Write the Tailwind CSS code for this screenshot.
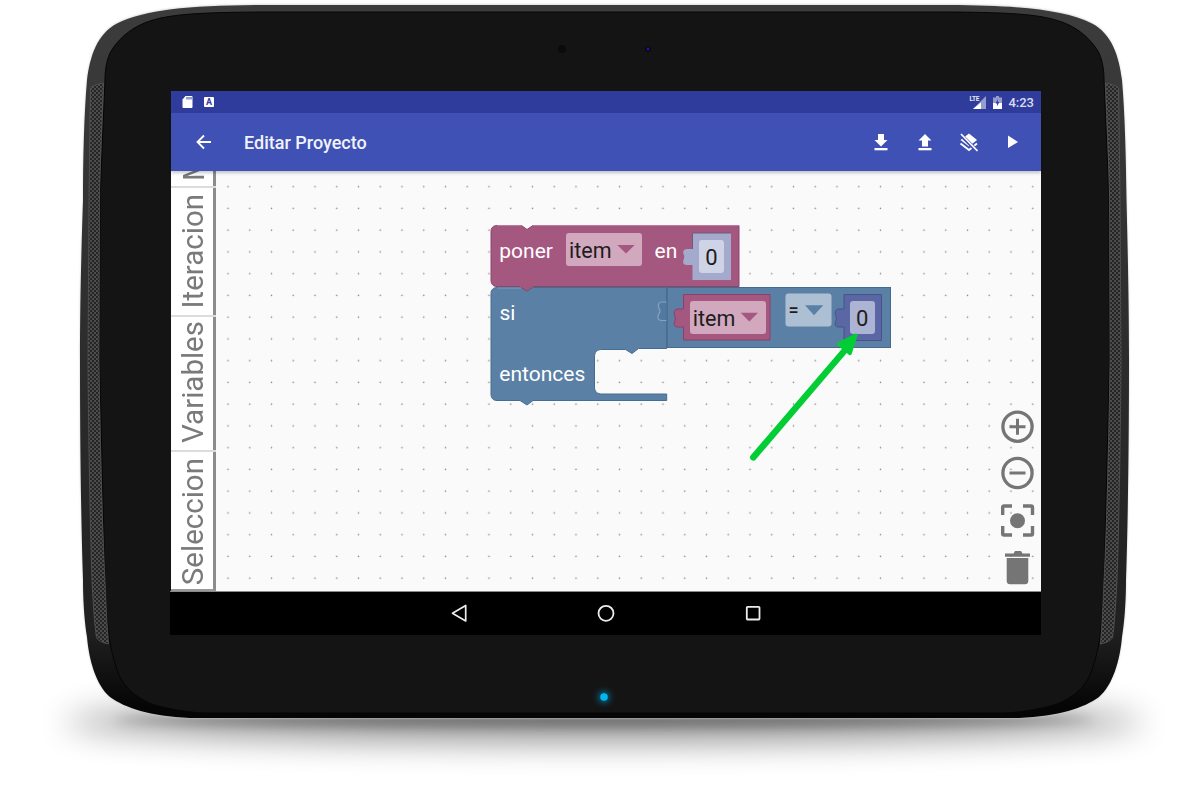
<!DOCTYPE html>
<html>
<head>
<meta charset="utf-8">
<script src="https://cdn.jsdelivr.net/npm/@tailwindcss/browser@4"></script>
<title>Editar Proyecto</title>
</head>
<body class="bg-white">
<div class="relative w-[1200px] h-[797px] overflow-hidden bg-white font-['Roboto',sans-serif]">
  <!-- device body -->
  <svg class="absolute inset-0" width="1200" height="797" viewBox="0 0 1200 797">
    <defs>
      <filter id="soft" x="-20%" y="-300%" width="140%" height="700%"><feGaussianBlur stdDeviation="16"/></filter>
      <filter id="soft2" x="-20%" y="-300%" width="140%" height="700%"><feGaussianBlur stdDeviation="6"/></filter>
      <filter id="halo" x="-5%" y="-5%" width="110%" height="110%"><feGaussianBlur stdDeviation="1"/></filter>
      <filter id="glow" x="-200%" y="-200%" width="500%" height="500%"><feGaussianBlur stdDeviation="3"/></filter>
      <linearGradient id="bez" x1="0" y1="0" x2="0" y2="1">
        <stop offset="0" stop-color="#3c3c3c"/><stop offset="0.5" stop-color="#2c2c2c"/><stop offset="0.88" stop-color="#202020"/><stop offset="0.985" stop-color="#050505"/>
      </linearGradient>
      <pattern id="holes" width="4" height="4" patternUnits="userSpaceOnUse">
        <rect width="4" height="4" fill="#4c4c4c"/>
        <circle cx="1" cy="1" r="0.95" fill="#141414"/>
        <circle cx="3" cy="3" r="0.95" fill="#141414"/>
      </pattern>
    </defs>
    <ellipse cx="604" cy="722" rx="540" ry="20" fill="#000" opacity="0.42" filter="url(#soft)"/>
    <ellipse cx="604" cy="720" rx="490" ry="7" fill="#000" opacity="0.35" filter="url(#soft2)"/>
    <path d="M260 4.500 C190 5 145 9 117 23 C97 34 90 56 87 80 C84 115 83 160 83 200 C81 260 80 310 80 360 C80 440 81 520 83 580 C83 605 85 625 87 637 C89 660 96 685 110 697 C125 708 150 716 190 718 L1019 718 C1059 716 1084 708 1099 697 C1113 685 1120 660 1122 637 C1124 625 1126 605 1126 580 C1128 520 1129 440 1129 360 C1129 310 1128 260 1126.500 200 C1126 160 1125 115 1122 80 C1119 56 1112 34 1092 23 C1064 9 1019 5 949 4.500 Z" fill="#cfcfcf" filter="url(#halo)"/>
    <path d="M260 5 C190 5.500 145 9.500 117 23.500 C97 34 90 56 87 80 C84 115 83 160 83 200 C81 260 80 310 80 360 C80 440 81 520 83 580 C83 605 85 625 87 637 C89 660 96 685 110 697 C125 708 150 716 190 718 L1019 718 C1059 716 1084 708 1099 697 C1113 685 1120 660 1122 637 C1124 625 1126 605 1126 580 C1128 520 1129 440 1129 360 C1129 310 1128 260 1126.500 200 C1126 160 1125 115 1122 80 C1119 56 1112 34 1092 23.500 C1064 9.500 1019 5.500 949 5 Z" fill="url(#bez)"/>
    <path d="M260 12 C190 12.500 167 15 147 22 C128 29 116 42 110 53 C106 62 105 72 105 80 L100 200 L99.500 360 L105 580 C106 610 108 630 110 643 C113 658 116 668 120 677 C126 688 132 693 140 698 C148 703 156 706 167 708 C180 711 195 713 207 713 L1002 713 C1014 713 1029 711 1042 708 C1053 706 1061 703 1069 698 C1077 693 1083 688 1089 677 C1093 668 1096 658 1099 643 C1101 630 1103 610 1104 580 L1109.500 360 L1109 200 L1104 80 C1104 72 1103 62 1099 53 C1093 42 1081 29 1062 22 C1042 15 1019 12.500 949 12 Z" fill="#141414" stroke="#050505" stroke-width="1"/>
    <!-- speakers -->
    <path d="M90.500 88 C92 86 98 84 103.500 83 C102 120 100 160 99.500 200 L99 360 C100 440 102 520 105 580 C106 605 107 625 108.500 644 C103 643 99 641 96.500 638 C94 620 93 600 92 580 C90 520 88.500 440 88 360 L89 200 C89.500 160 90 120 90.500 88 Z" fill="url(#holes)" stroke="#5a5a5a" stroke-width="0.7"/>
    <path d="M1118.500 88 C1117 86 1111 84 1105.500 83 C1107 120 1109 160 1109.500 200 L1110 360 C1109 440 1107 520 1104 580 C1103 605 1102 625 1100.500 644 C1106 643 1110 641 1112.500 638 C1115 620 1116 600 1117 580 C1119 520 1120.500 440 1121 360 L1120 200 C1119.500 160 1119 120 1118.500 88 Z" fill="url(#holes)" stroke="#5a5a5a" stroke-width="0.7"/>
    <!-- camera -->
    <circle cx="562" cy="49" r="4" fill="#0b0b0b"/>
    <circle cx="648" cy="49" r="3" fill="#0a0a0a"/>
    <circle cx="648" cy="49" r="1.400" fill="#2a10c8"/>
    <!-- LED -->
    <circle cx="604" cy="697" r="6" fill="#00a8e8" opacity="0.55" filter="url(#glow)"/>
    <circle cx="604" cy="697" r="3.800" fill="#00b6f2"/>
  </svg>

  <!-- screen -->
  <div class="absolute left-[171px] top-[91px] w-[870px] h-[544px] flex flex-col">
    <!-- status bar -->
    <div class="h-[22px] shrink-0 bg-[#2f3c9b] flex items-center pl-[11px] pr-[7px]">
      <svg width="11" height="12" viewBox="0 0 11 12"><path d="M3.500 0H9.500A1 1 0 0 1 10.500 1V11A1 1 0 0 1 9.500 12H1.500A1 1 0 0 1 .5 11V3.500Z" fill="#fff"/><path d="M5 1v2.500M7 1v2.500M9 1v2.500" stroke="#2f3c9b" stroke-width="1"/></svg>
      <div class="ml-[11px] w-[10px] h-[10px] rounded-[1px] bg-white flex items-center justify-center text-[9px] leading-none font-bold text-[#2f3c9b]">A</div>
      <div class="ml-auto relative w-[17px] h-[13px]">
        <svg class="absolute inset-0" width="17" height="13" viewBox="0 0 17 13"><path d="M4 13H17V0Z" fill="#fff" opacity="0.5"/><path d="M4 13H12V6.500L4 13Z" fill="#fff"/></svg>
        <span class="absolute left-0 top-[0px] text-[6.500px] leading-none font-bold text-[#e4e6f4] tracking-[-0.2px]">LTE</span>
      </div>
      <svg class="ml-[7px]" width="9" height="13" viewBox="0 0 9 13"><path d="M3 0H6V1.500H9V13H0V1.500H3Z" fill="#fff" opacity="0.5"/><path d="M0 7H9V13H0Z" fill="#fff"/><path d="M5 3L2.500 7.500H4.200L3.800 10.500L6.500 6H4.800Z" fill="#2f3c9b"/></svg>
      <span class="ml-[6px] text-[13px] leading-none font-medium text-[#d9dcef]">4:23</span>
    </div>
    <!-- app bar -->
    <div class="h-[58px] shrink-0 bg-[#3f51b5] flex items-center relative z-10 shadow-[0_2px_3px_rgba(0,0,0,0.22)]">
      <svg class="ml-[25px]" width="16" height="16" viewBox="0 0 16 16"><path d="M15 8H2M8 1.500L1.500 8L8 14.500" fill="none" stroke="#fff" stroke-width="1.800"/></svg>
      <span class="ml-[32px] mt-[2px] text-[18px] leading-none font-medium text-[#f1f2fa]">Editar Proyecto</span>
      <div class="ml-auto flex items-center pr-[22px]">
        <svg width="14" height="17" viewBox="0 0 14 17"><path d="M4 0H10V6H13.500L7 12.500L.5 6H4Z" fill="#fff"/><rect x="0.500" y="14" width="13" height="2.300" fill="#fff"/></svg>
        <svg class="ml-[30px]" width="14" height="17" viewBox="0 0 14 17"><path d="M4 12.500H10V6.500H13.500L7 0L.5 6.500H4Z" fill="#fff"/><rect x="0.500" y="14" width="13" height="2.300" fill="#fff"/></svg>
        <svg class="ml-[27px]" width="19" height="19" viewBox="0 0 19 19"><path d="M10 .5L1.500 7L10 13.500L18 7Z" fill="#fff"/><path d="M1.500 10.500L10 17L18 10.500" fill="none" stroke="#fff" stroke-width="1.800"/><path d="M.5 .5L18.500 18.500" stroke="#3f51b5" stroke-width="3.800"/><path d="M2 1L18.500 18" stroke="#fff" stroke-width="1.700"/></svg>
        <svg class="ml-[29px]" width="12" height="14" viewBox="0 0 12 14"><path d="M1 0.500L11 7L1 13Z" fill="#fff"/></svg>
      </div>
    </div>
    <!-- workspace -->
    <div class="h-[420px] shrink-0 relative bg-[#fafafa] flex">
      <!-- grid of dots -->
      <svg class="absolute inset-0" width="870" height="420">
        <defs>
          <pattern id="grid" x="45.620" y="4.420" width="21.750" height="21.750" patternUnits="userSpaceOnUse">
            <circle cx="11.380" cy="11.280" r="0.800" fill="#8f8f8f"/>
          </pattern>
        </defs>
        <rect width="870" height="420" fill="url(#grid)"/>
      </svg>
      <!-- toolbox tabs -->
      <div class="relative w-[45px] h-full flex flex-col text-[#7a7a7a] text-[29.500px] leading-none">
        <div class="h-[15px] overflow-hidden bg-white border-r-[3px] border-[#8c8c8c] flex justify-center items-end pb-[5px] pl-[3px]"><span class="[writing-mode:vertical-rl] rotate-180 h-[16px] overflow-hidden">M</span></div>
        <div class="h-[2px] border-t-2 border-[#dcdcdc]"></div>
        <div class="h-[127px] bg-white border-r-[3px] border-[#8c8c8c] flex justify-center items-end pb-[6px] pl-[3px]"><span class="[writing-mode:vertical-rl] rotate-180">Iteracion</span></div>
        <div class="h-[2px] border-t-2 border-[#dcdcdc]"></div>
        <div class="h-[133px] bg-white border-r-[3px] border-[#8c8c8c] flex justify-center items-end pb-[7px] pl-[3px]"><span class="[writing-mode:vertical-rl] rotate-180">Variables</span></div>
        <div class="h-[2px] border-t-2 border-[#dcdcdc]"></div>
        <div class="h-[139px] bg-white border-r-[3px] border-[#8c8c8c] border-b-2 border-b-[#9a9a9a] flex justify-center items-end pb-[4px] pl-[3px]"><span class="[writing-mode:vertical-rl] rotate-180">Seleccion</span></div>
      </div>
      <!-- blocks: page coordinates, offset by the workspace origin -->
      <svg class="absolute left-0 top-0" width="870" height="420" viewBox="171 171 870 420">
        <!-- si block -->
        <path d="M497 287.500H521L527 291.500L533 287.500H666.700V348.500H638.500L632 353.500L625.500 349.500H602C597 349.500 594.500 352 594.500 357V387C594.500 391.500 597 394 602 394H666.700V400.500H533L527 405L520 400.500H497C493 400.500 491 398 491 394V293.500C491 290 493 287.500 497 287.500Z" fill="#5b80a5" stroke="#466d90" stroke-width="1"/>
        <path d="M497 288H521" stroke="#7f9dba" stroke-width="1"/>
        <rect x="667" y="287.500" width="223.500" height="60" fill="#5b80a5" stroke="#456a8d" stroke-width="1"/>
        <path d="M667 302H662C659 302 658 304 658.500 307C659 309 660 310 660 311C660 313 658.500 314 658 316C657.500 319 659 320.500 662 320.500H667" fill="#527aa0" stroke="#84a3bf" stroke-width="1.200"/>
        <path d="M667 288V347" stroke="#486c8e" stroke-width="1"/>
        <!-- poner block -->
        <path d="M497 225.500H521.500L527 229.500L533 225.500H739V286.500H533L527 291L520.500 286.500H497C493 286.500 491 284 491 280V231.500C491 228 493 225.500 497 225.500Z" fill="#a5587f" stroke="#8a456a" stroke-width="1"/>
        <path d="M497 225.500H521.500M533 225.500H739" stroke="#bd7a9c" stroke-width="1"/>
        <rect x="566" y="233" width="76" height="33" rx="3" fill="#d2a8bf"/>
        <path d="M617.300 245H634.700L626 253.500Z" fill="#a5587f"/>
        <!-- number in poner -->
        <path d="M692.500 233H731V280H692.500V265H687C683.500 265 682.500 263 683.500 260C684.500 257.500 684.500 256 683.500 254C682.500 251 684 249 687 249H692.500Z" fill="#a3aacb"/>
        <path d="M692.500 249V233H731" fill="none" stroke="#74597f" stroke-width="1"/>
        <rect x="699" y="240" width="25" height="33" rx="3" fill="#ced3e6"/>
        <!-- item variable -->
        <path d="M683.500 294.500H770V340H683.500V327H678C674.500 327 673.500 325 674.500 322C675.500 319.500 675.500 317 674.500 315C673.500 311 675 309 678 309H683.500Z" fill="#a5587f" stroke="#8d3f68" stroke-width="1"/>
        <rect x="690" y="301" width="76" height="33" rx="3" fill="#d2a8bf"/>
        <path d="M740.700 312.700H758L749.300 321.500Z" fill="#a5587f"/>
        <!-- = field -->
        <rect x="785.500" y="293.500" width="46" height="33" rx="3" fill="#adc0d3"/>
        <path d="M805 305.300H823.300L814 315.300Z" fill="#5b80a5"/>
        <!-- number in si -->
        <path d="M844 294.500H881.500V340.500H844V327H839C835.500 327 834.500 325 835.500 322C836.500 319.500 836.500 317 835.500 315C834.500 311 836 309 839 309H844Z" fill="#5b67a5" stroke="#495389" stroke-width="1"/>
        <rect x="850" y="301" width="25" height="33" rx="3" fill="#adb3d2"/>
        <!-- texts -->
        <g font-family="Roboto, sans-serif" font-size="21">
          <text x="499.300" y="257.500" fill="#fff">poner</text>
          <text x="569" y="258" font-size="21.500" fill="#1d1d1d">item</text>
          <text x="654.500" y="257.500" fill="#fff">en</text>
          <text x="711.500" y="265" font-size="22" text-anchor="middle" fill="#1d1d1d">0</text>
          <text x="499.500" y="320" fill="#fff">si</text>
          <text x="692.800" y="326" font-size="21.500" fill="#1d1d1d">item</text>
          <text x="788.500" y="316" font-size="18" font-weight="500" fill="#1d1d1d">=</text>
          <text x="862.300" y="326" font-size="22" text-anchor="middle" fill="#1d1d1d">0</text>
          <text x="499.300" y="380.500" fill="#fff">entonces</text>
        </g>
        <!-- annotation arrow -->
        <path d="M753.300 457.300L846 349" stroke="#03cd35" stroke-width="6.500" stroke-linecap="round" fill="none"/>
        <path d="M855.800 335.200L838.600 344L850 353.500Z" fill="#03cd35" stroke="#03cd35" stroke-width="3.500" stroke-linejoin="round"/>
        <!-- zoom controls -->
        <circle cx="1017.500" cy="426.700" r="14.600" fill="none" stroke="#757575" stroke-width="3.300"/>
        <path d="M1009.500 426.700H1025.500M1017.500 418.700V434.700" stroke="#757575" stroke-width="3"/>
        <circle cx="1017.500" cy="473" r="14.600" fill="none" stroke="#757575" stroke-width="3.300"/>
        <path d="M1009.500 473H1025.500" stroke="#757575" stroke-width="3"/>
        <path d="M1002.700 515V507.500Q1002.700 506 1004.200 506H1012M1023 506H1031Q1032.500 506 1032.500 507.500V515M1032.500 526V533.500Q1032.500 535 1031 535H1023M1012 535H1004.200Q1002.700 535 1002.700 533.500V526" fill="none" stroke="#757575" stroke-width="3.400"/>
        <circle cx="1017.500" cy="520.700" r="7.500" fill="#757575"/>
        <!-- trash -->
        <path d="M1005 553.500H1013.500L1015 551H1021L1022.500 553.500H1030V556.800H1005Z" fill="#757575"/>
        <path d="M1006.700 558H1028.300V581C1028.300 583 1027 584.300 1025 584.300H1010C1008 584.300 1006.700 583 1006.700 581Z" fill="#757575"/>
      </svg>
    </div>
    <!-- nav bar -->
    <div class="relative flex-1 -ml-px bg-black border-t border-[#8a8a8a]">
      <svg class="absolute inset-0" width="871" height="43" viewBox="170 592 871 43">
        <path d="M452.500 613.300L465.700 605.500V621Z" fill="none" stroke="#ececec" stroke-width="1.700" stroke-linejoin="round"/>
        <circle cx="606" cy="613.300" r="7.500" fill="none" stroke="#ececec" stroke-width="1.800"/>
        <rect x="746.800" y="606.800" width="12.700" height="12.700" rx="0.800" fill="none" stroke="#ececec" stroke-width="1.800"/>
      </svg>
    </div>
  </div>
</div>
</body>
</html>
